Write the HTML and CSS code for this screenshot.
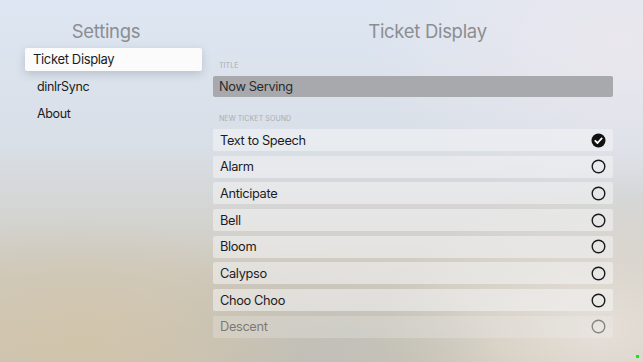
FILE: index.html
```html
<!DOCTYPE html>
<html lang="en">
<head>
    <meta charset="UTF-8">
    <meta name="viewport" content="width=device-width, initial-scale=1.0">
    <title>Settings</title>
    <link rel="stylesheet" href="styles.css">
</head>
<body>
    <div class="screen">
        <div class="sidebar">
            <h1 class="heading">Settings</h1>
            <ul class="menu">
                <li class="active">Ticket Display</li>
                <li>dinlrSync</li>
                <li>About</li>
            </ul>
        </div>
        <div class="main">
            <h1 class="heading">Ticket Display</h1>
            <div class="content">
                <div class="label">TITLE</div>
                <div class="field">Now Serving</div>
                <div class="label sound">NEW TICKET SOUND</div>
                <ul class="list">
                    <li>Text to Speech
                        <svg class="check" width="15" height="15" viewBox="0 0 15 15"><circle cx="7.5" cy="7.5" r="7" fill="#111"/><path d="M4.3 7.8l2.2 2.2 4.2-4.6" fill="none" stroke="#fff" stroke-width="1.8" stroke-linecap="round" stroke-linejoin="round"/></svg>
                    </li>
                    <li>Alarm <svg class="check" width="15" height="15" viewBox="0 0 15 15"><circle cx="7.5" cy="7.5" r="6.3" fill="none" stroke="#1a1a1a" stroke-width="1.4"/></svg></li>
                    <li>Anticipate <svg class="check" width="15" height="15" viewBox="0 0 15 15"><circle cx="7.5" cy="7.5" r="6.3" fill="none" stroke="#1a1a1a" stroke-width="1.4"/></svg></li>
                    <li>Bell <svg class="check" width="15" height="15" viewBox="0 0 15 15"><circle cx="7.5" cy="7.5" r="6.3" fill="none" stroke="#1a1a1a" stroke-width="1.4"/></svg></li>
                    <li>Bloom <svg class="check" width="15" height="15" viewBox="0 0 15 15"><circle cx="7.5" cy="7.5" r="6.3" fill="none" stroke="#1a1a1a" stroke-width="1.4"/></svg></li>
                    <li>Calypso <svg class="check" width="15" height="15" viewBox="0 0 15 15"><circle cx="7.5" cy="7.5" r="6.3" fill="none" stroke="#1a1a1a" stroke-width="1.4"/></svg></li>
                    <li>Choo Choo <svg class="check" width="15" height="15" viewBox="0 0 15 15"><circle cx="7.5" cy="7.5" r="6.3" fill="none" stroke="#1a1a1a" stroke-width="1.4"/></svg></li>
                    <li class="fade">Descent <svg class="check" width="15" height="15" viewBox="0 0 15 15"><circle cx="7.5" cy="7.5" r="6.3" fill="none" stroke="#1a1a1a" stroke-width="1.4"/></svg></li>
                </ul>
            </div>
        </div>
        <div class="status">Connected<span class="dot"></span></div>
    </div>
</body>
</html>
```

FILE: styles.css
```css
*{
    margin: 0;
    padding: 0;
    box-sizing: border-box;
}
body{
    font-family: "Inter", "Liberation Sans", sans-serif;
    color: #1c1c1e;
}
.screen{
    width: 643px;
    height: 362px;
    overflow: hidden;
    position: relative;
    display: flex;
    background:
        radial-gradient(ellipse 260px 120px at 80px 340px, rgba(210,196,170,0.9), rgba(210,196,170,0) 100%),
        radial-gradient(ellipse 200px 110px at 300px 360px, rgba(190,190,185,0.9), rgba(190,190,185,0) 100%),
        radial-gradient(ellipse 220px 140px at 600px 330px, rgba(232,226,220,0.9), rgba(232,226,220,0) 100%),
        radial-gradient(ellipse 260px 160px at 620px 40px, rgba(236,232,238,0.9), rgba(236,232,238,0) 100%),
        linear-gradient(180deg, #dde6f2 0%, #d9dfe7 40%, #cfcbc0 75%, #cbc4b4 100%);
}
ul{
    list-style: none;
}
.heading{
    font-weight: 400;
    font-size: 18.5px;
    letter-spacing: -0.3px;
    color: #8b8e93;
    text-align: center;
    height: 48px;
    padding-top: 19px;
    line-height: 24px;
}
.sidebar{
    width: 212px;
    padding: 0 10px 0 25px;
}
.sidebar .heading{
    margin-left: -25px;
    margin-right: -10px;
}
.menu li{
    height: 27px;
    line-height: 23px;
    font-size: 12.5px;
    letter-spacing: -0.35px;
    padding-left: 12px;
}
.menu .active{
    height: 23px;
    margin-bottom: 4px;
    padding-left: 8px;
    font-size: 13px;
    background: #fbfbfc;
    border-radius: 2px;
    box-shadow: 0 3px 8px rgba(80,90,110,0.25);
}
.main{
    flex: 1;
}
.content{
    padding: 0 30px 0 1px;
}
.label{
    font-size: 7px;
    color: #a9adb3;
    letter-spacing: 0.1px;
    padding-left: 6px;
    height: 28px;
    line-height: 36px;
}
.field{
    height: 21px;
    line-height: 21px;
    background: #a7a9ad;
    border-radius: 2px;
    padding-left: 6px;
    font-size: 12.8px;
    letter-spacing: -0.35px;
    color: #2b2b2d;
}
.sound{
    height: 32px;
    line-height: 44px;
}
.list li{
    height: 22px;
    margin-bottom: 4.7px;
    display: flex;
    align-items: center;
    justify-content: space-between;
    padding: 0 7px 0 7px;
    font-size: 12.8px;
    letter-spacing: -0.35px;
    background: rgba(244,244,246,0.55);
    border-radius: 2px;
}
.list .fade{
    opacity: 0.45;
}
.status{
    position: absolute;
    right: 4px;
    bottom: 3px;
    font-size: 5px;
    color: #dcdedd;
    display: flex;
    align-items: center;
    gap: 2px;
}
.dot{
    width: 3px;
    height: 3px;
    background: #16e816;
}
```
